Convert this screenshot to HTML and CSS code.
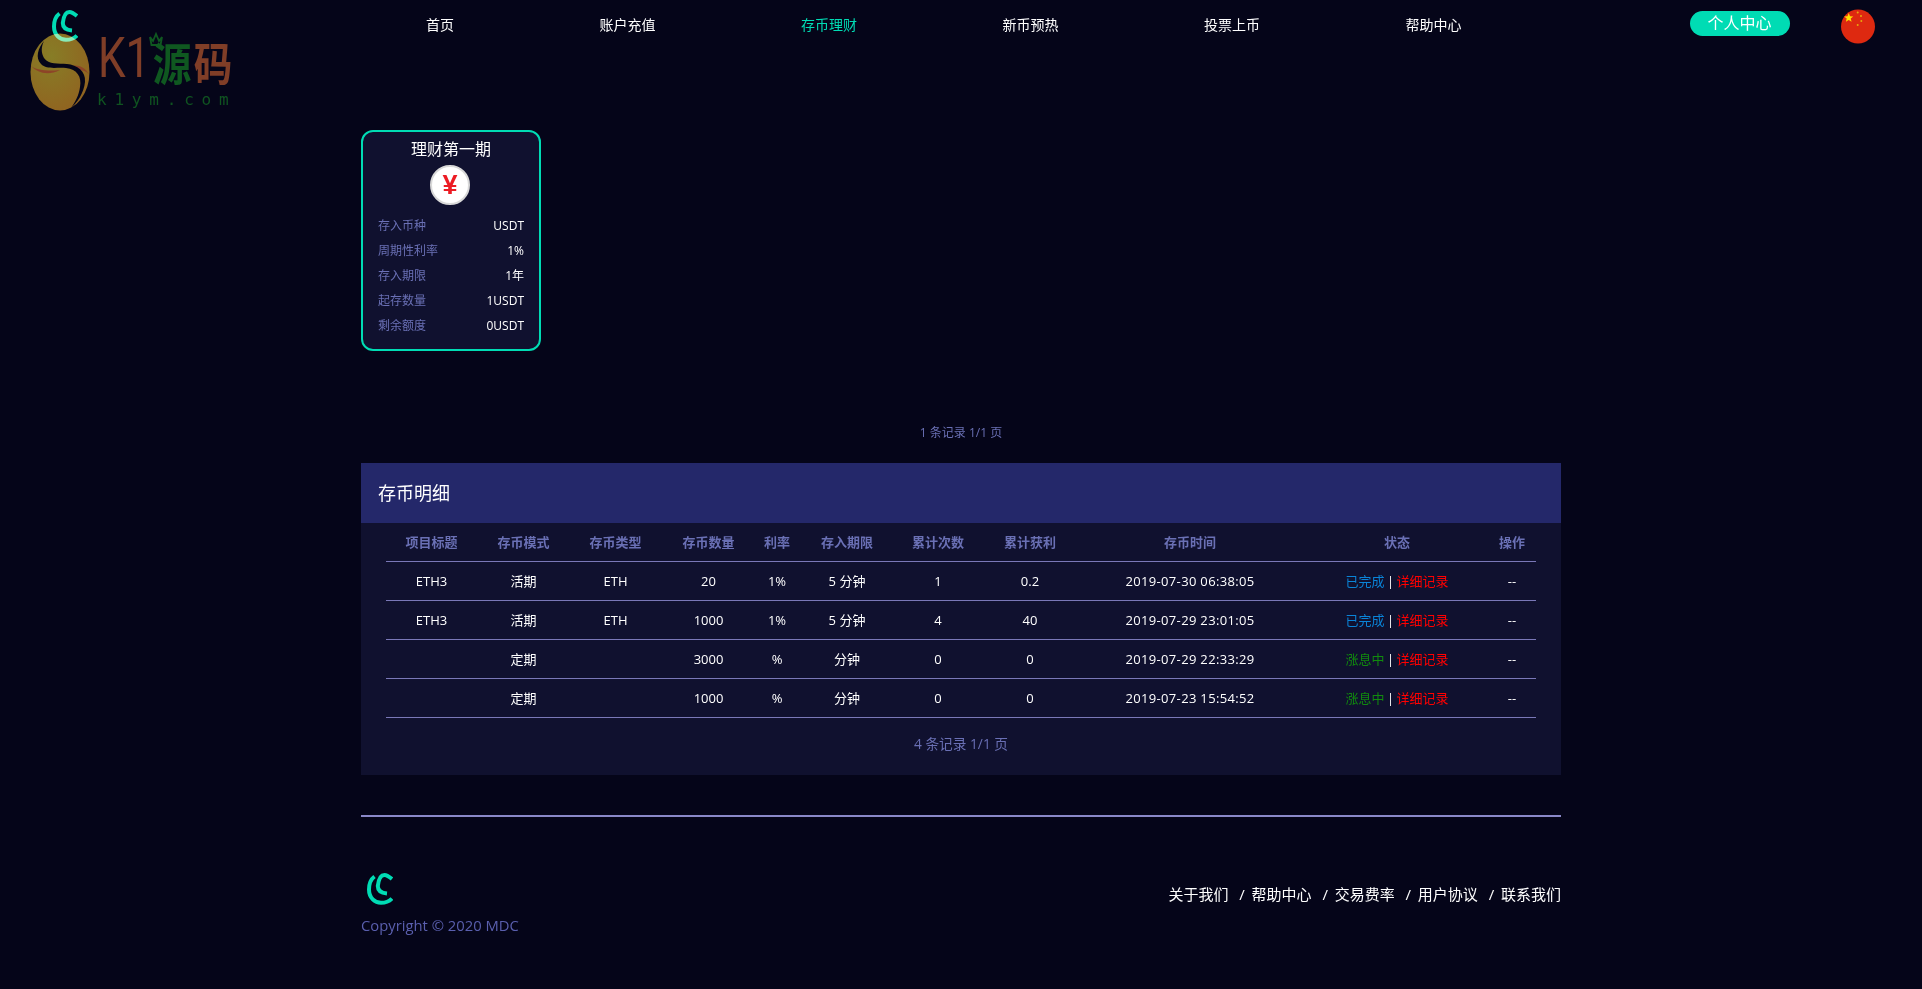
FILE: index.html
```html
<!DOCTYPE html>
<html lang="zh-CN">
<head>
<meta charset="utf-8">
<title>存币理财</title>
<link rel="stylesheet" href="styles.css">
</head>
<body>
<header class="topbar">
  <svg class="brand" viewBox="0 0 26 32"><path class="arc-a" d="M7.500 3.500C3.500 6.500 2 11.500 2 16.500C2 25 8 29.800 14 29.800C18 29.800 22 28.800 25 25.500"/><path class="arc-b" d="M25 6C22 3.500 19.500 2 17.500 2C13 2 11.500 7 10.800 13C10.800 18 14 20 20 20.500"/></svg>
  <nav class="nav">
    <a>首页</a><a>账户充值</a><a class="active">存币理财</a><a>新币预热</a><a>投票上币</a><a>帮助中心</a>
  </nav>
  <a class="user-btn">个人中心</a>
  <svg class="flag" viewBox="0 0 34 35">
    <circle class="flag-bg" cx="17" cy="17.500" r="17"/>
    <polygon class="flag-star" points="7.700,4 9,7.200 12.300,7.400 9.700,9.500 10.600,12.800 7.700,11 4.900,12.800 5.700,9.500 3.100,7.400 6.500,7.200"/>
    <circle class="flag-dot" cx="16.700" cy="3.500" r="1"/>
    <circle class="flag-dot" cx="20" cy="7" r="1"/>
    <circle class="flag-dot" cx="20.300" cy="12" r="1"/>
    <circle class="flag-dot" cx="16.700" cy="16" r="1"/>
  </svg>
</header>

<div class="watermark">
  <svg class="wm-egg" viewBox="0 0 60 78">
    <defs><radialGradient id="egg" cx="35%" cy="30%" r="80%"><stop offset="0" stop-color="#857a0e"/><stop offset="1" stop-color="#8f5f08"/></radialGradient></defs>
    <ellipse cx="30" cy="39" rx="29.500" ry="38.500" fill="url(#egg)"/>
    <path d="M1 33C8 40 18 43 30 37C20 38 8 38 1 33Z" fill="#8b4010"/>
    <path d="M40 33C48 31 55 34 59 41C54 36 48 37 45 38Z" fill="#8b4010"/>
    <path d="M14 8C8 15 5 25 11 31C17 37 27 34 36 35C47 36 52 44 50 54C49 62 45 70 40 76C47 70 54 60 55 49C56 38 47 32 37 31C28 30 19 32 14 25C11 20 11 14 14 8Z" fill="#000"/>
  </svg>
  <span class="wm-k">K1</span>
  <span class="wm-yuan">源</span>
  <span class="wm-ma">码</span>
  <svg class="wm-crown" viewBox="0 0 16 15"><path d="M2 5L5 9L8 2L11 9L14 5L12.500 13H3.500Z" fill="none" stroke="#0a5508" stroke-width="1.800"/></svg>
  <span class="wm-url">k1ym.com</span>
</div>

<main class="page">
  <section class="cards">
    <article class="card">
      <h3 class="card-title">理财第一期</h3>
      <div class="coin"><span>¥</span></div>
      <dl class="facts">
        <div class="fact"><dt>存入币种</dt><dd>USDT</dd></div>
        <div class="fact"><dt>周期性利率</dt><dd>1%</dd></div>
        <div class="fact"><dt>存入期限</dt><dd>1年</dd></div>
        <div class="fact"><dt>起存数量</dt><dd>1USDT</dd></div>
        <div class="fact"><dt>剩余额度</dt><dd>0USDT</dd></div>
      </dl>
    </article>
  </section>
  <p class="pager pager-cards">1 条记录 1/1 页</p>

  <section class="panel">
    <h2 class="panel-title">存币明细</h2>
    <div class="panel-body">
      <table class="records">
        <thead>
          <tr><th>项目标题</th><th>存币模式</th><th>存币类型</th><th>存币数量</th><th>利率</th><th>存入期限</th><th>累计次数</th><th>累计获利</th><th>存币时间</th><th>状态</th><th>操作</th></tr>
        </thead>
        <tbody>
          <tr><td>ETH3</td><td>活期</td><td>ETH</td><td>20</td><td>1%</td><td>5 分钟</td><td>1</td><td>0.2</td><td class="stamp">2019-07-30 06:38:05</td><td><span class="done">已完成</span><span class="sep">|</span><a class="detail">详细记录</a></td><td>--</td></tr>
          <tr><td>ETH3</td><td>活期</td><td>ETH</td><td>1000</td><td>1%</td><td>5 分钟</td><td>4</td><td>40</td><td class="stamp">2019-07-29 23:01:05</td><td><span class="done">已完成</span><span class="sep">|</span><a class="detail">详细记录</a></td><td>--</td></tr>
          <tr><td></td><td>定期</td><td></td><td>3000</td><td>%</td><td>分钟</td><td>0</td><td>0</td><td class="stamp">2019-07-29 22:33:29</td><td><span class="earning">涨息中</span><span class="sep">|</span><a class="detail">详细记录</a></td><td>--</td></tr>
          <tr><td></td><td>定期</td><td></td><td>1000</td><td>%</td><td>分钟</td><td>0</td><td>0</td><td class="stamp">2019-07-23 15:54:52</td><td><span class="earning">涨息中</span><span class="sep">|</span><a class="detail">详细记录</a></td><td>--</td></tr>
        </tbody>
      </table>
      <p class="pager pager-table">4 条记录 1/1 页</p>
    </div>
  </section>

  <footer class="footer">
    <div class="footer-left">
      <svg class="footer-logo" viewBox="0 0 26 32"><path class="arc-a" d="M7.500 3.500C3.500 6.500 2 11.500 2 16.500C2 25 8 29.800 14 29.800C18 29.800 22 28.800 25 25.500"/><path class="arc-b" d="M25 6C22 3.500 19.500 2 17.500 2C13 2 11.500 7 10.800 13C10.800 18 14 20 20 20.500"/></svg>
      <p class="copyright">Copyright © 2020 MDC</p>
    </div>
    <div class="footer-links">
      <a>关于我们</a><i>/</i><a>帮助中心</a><i>/</i><a>交易费率</a><i>/</i><a>用户协议</a><i>/</i><a>联系我们</a>
    </div>
  </footer>
</main>
</body>
</html>
```
FILE: styles.css
```css
* { box-sizing: border-box; }
html, body { margin: 0; padding: 0; }
body {
  height: 989px;
  overflow: hidden;
  background: #050519;
  color: #fff;
  font-family: "Open Sans", "Noto Sans CJK SC", sans-serif;
  font-size: 14px;
}
a { color: inherit; text-decoration: none; }
h2, h3, p, dl, dd { margin: 0; font-weight: 400; }

.topbar { display: flex; align-items: center; height: 50px; padding-left: 52px; }
.brand { width: 26px; height: 32px; flex: none; align-self: flex-start; margin-top: 10px; }
.arc-a, .arc-b { fill: none; stroke: #00dcb4; stroke-width: 4; }
.nav { display: flex; gap: 145.500px; margin-left: 348px; line-height: 20px; }
.nav .active { color: #00dcb4; }
.user-btn {
  margin-left: 228px; width: 100px; height: 25px; line-height: 25px;
  border-radius: 13px; background: #00dcb4; color: #fff; text-align: center; font-size: 16px;
  align-self: flex-start; margin-top: 11px;
}
.flag { width: 34px; height: 35px; margin-left: 51px; align-self: flex-start; margin-top: 9px; }
.flag-bg { fill: #de2910; }
.flag-star { fill: #ffde00; }
.flag-dot { fill: #e9a90d; }

.watermark { position: absolute; left: 0; top: 0; width: 240px; height: 115px; pointer-events: none; mix-blend-mode: screen; }
.wm-egg { position: absolute; left: 30px; top: 33px; width: 60px; height: 78px; }
.wm-k { position: absolute; left: 98px; top: 28px; font: 400 44px/60px Roboto, sans-serif; color: #7d3a10; transform: scaleY(1.25); }
.wm-yuan { position: absolute; left: 151px; top: 32px; font: 700 42px/60px "Noto Sans CJK SC", sans-serif; color: #0a5508; transform: scale(0.92, 1.08); }
.wm-ma { position: absolute; left: 192px; top: 32px; font: 700 42px/60px "Noto Sans CJK SC", sans-serif; color: #7d3a10; transform: scale(0.92, 1.08); }
.wm-crown { position: absolute; left: 148px; top: 32px; width: 16px; height: 15px; }
.wm-url { position: absolute; left: 97px; top: 90px; font: 400 16px/20px "DejaVu Sans Mono", monospace; color: #0a5008; letter-spacing: 7.800px; }

.page { width: 1200px; margin: 0 auto; }
.cards { display: flex; padding-top: 80px; }
.card {
  width: 180px; height: 221px; background: #10112f; border: 2px solid #00dcb4; border-radius: 12px;
  padding: 6px 15px 0;
}
.card-title { font-size: 16px; line-height: 22px; text-align: center; }
.coin {
  width: 40px; height: 40px; margin: 5px 0 0 52px; border-radius: 50%;
  background: #fff; border: 2px solid #d8d8d8;
  display: flex; align-items: center; justify-content: center;
  color: #ec1c24; font: 700 27px/1 "Liberation Sans", sans-serif;
}
.facts { margin-top: 8px; font-size: 12px; }
.fact { display: flex; justify-content: space-between; height: 25px; line-height: 25px; }
.fact dt { color: #6a70b5; }

.pager { text-align: center; color: #6a70b5; }
.pager-cards { font-size: 12px; line-height: 20px; margin-top: 72px; }
.panel { margin-top: 20px; background: #10112f; height: 312px; }
.panel-title { height: 60px; line-height: 60px; padding-left: 17px; font-size: 18px; background: #24286a; }
.panel-body { padding: 0 25px; }
.records { width: 1150px; border-collapse: collapse; table-layout: fixed; font-size: 13px; }
.records th { height: 38px; color: #6a70b5; font-weight: 700; }
.records td { height: 39px; }
.records th, .records td { padding: 0; text-align: center; border-bottom: 1px solid #7a78b8; }
.records th:nth-child(1) { width: 91px; }
.records th:nth-child(2) { width: 93px; }
.records th:nth-child(3) { width: 91px; }
.records th:nth-child(4) { width: 95px; }
.records th:nth-child(5) { width: 42px; }
.records th:nth-child(6) { width: 98px; }
.records th:nth-child(7) { width: 84px; }
.records th:nth-child(8) { width: 100px; }
.records th:nth-child(9) { width: 220px; }
.records th:nth-child(10) { width: 194px; }
.records th:last-child, .records td:last-child { padding-right: 6px; }
.stamp { letter-spacing: 0.330px; }
.sep { margin: 0 2.500px; }
.done { color: #0a84d8; }
.earning { color: #118a0e; }
.detail { color: #ff0000; }
.pager-table { font-size: 13.700px; line-height: 20px; margin-top: 16px; }

.footer {
  margin-top: 40px; border-top: 2px solid #8a88c8; padding-top: 56px;
  display: flex; justify-content: space-between; align-items: flex-start;
}
.footer-left { display: flex; flex-direction: column; align-items: flex-start; }
.footer-logo { width: 26px; height: 32px; margin-left: 6px; }
.copyright { margin-top: 10px; color: #5a5fae; line-height: 20px; font-size: 14.800px; }
.footer-links { display: flex; font-size: 15px; line-height: 20px; margin-top: 11px; }
.footer-links i { font-style: normal; margin: 0 6.800px 0 10.800px; }
```
